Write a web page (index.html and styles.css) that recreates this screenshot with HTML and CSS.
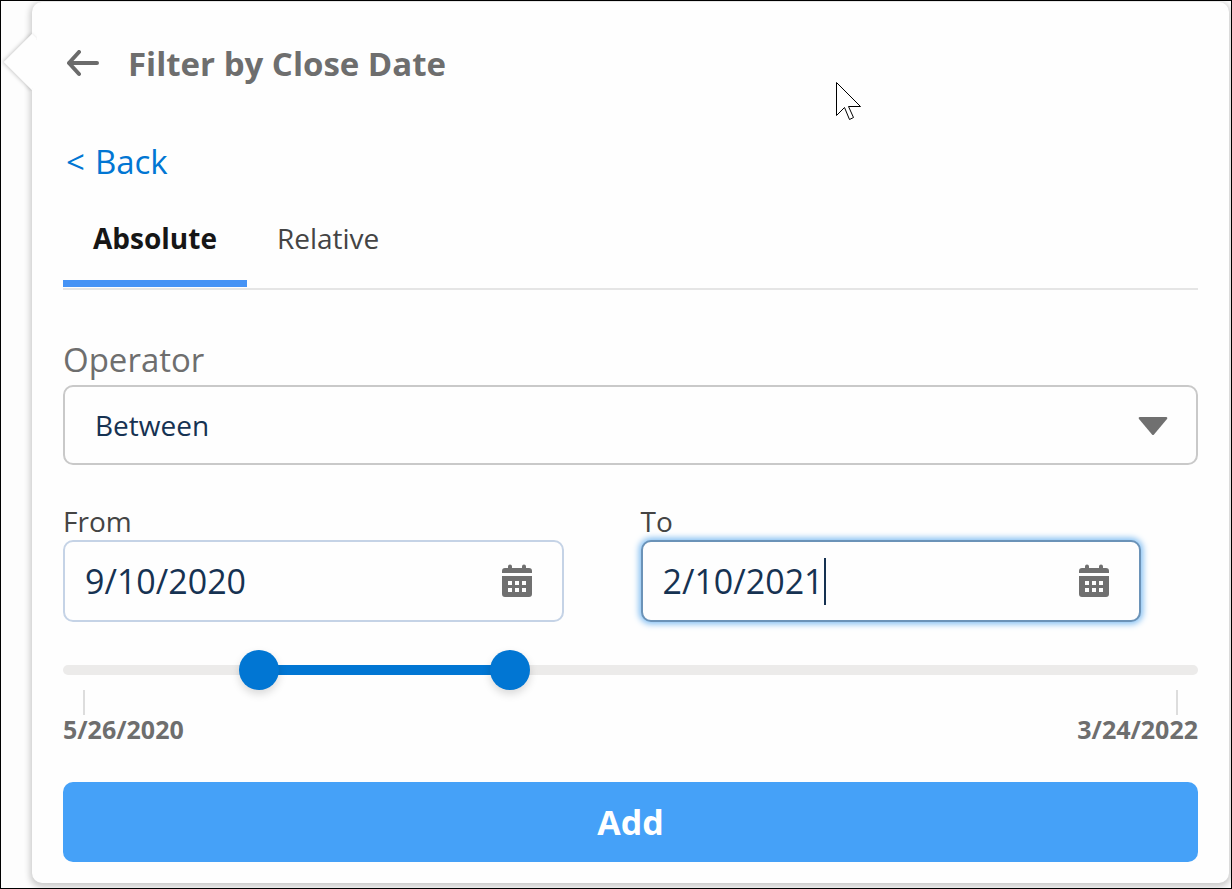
FILE: index.html
```html
<!DOCTYPE html>
<html lang="en">
<head>
    <meta charset="UTF-8">
    <meta name="viewport" content="width=device-width, initial-scale=1.0">
    <title>Filter by Close Date</title>
    <link rel="stylesheet" href="styles.css">
</head>
<body>
    <main class="popover">
        <header class="popover-header">
            <button class="icon-button" type="button" aria-label="Go back">
                <svg width="34" height="28" viewBox="0 0 34 28" fill="none" stroke="#6b6b6b" stroke-width="4" stroke-linecap="round" stroke-linejoin="round">
                    <path d="M13 2L3 13L13 24M3 13H31"/>
                </svg>
            </button>
            <h1 class="title">Filter by Close Date</h1>
        </header>

        <a class="back-link" href="#"><span>&lt;</span><span>Back</span></a>

        <nav class="tabs" role="tablist">
            <button class="tab active" type="button" role="tab" aria-selected="true">Absolute</button>
            <button class="tab" type="button" role="tab" aria-selected="false">Relative</button>
        </nav>

        <form class="filter-form">
            <label class="operator-label" for="operator">Operator</label>
            <div class="select-wrap">
                <select class="select" id="operator">
                    <option>Between</option>
                </select>
                <svg class="select-arrow" width="30" height="20" viewBox="0 0 30 20" fill="#707070">
                    <path d="M2 2H28Q30 2 29 4L16 19.500Q15 20.500 14 19.500L1 4Q0 2 2 2Z"/>
                </svg>
            </div>

            <div class="dates">
                <div class="field">
                    <label class="date-label" for="from">From</label>
                    <div class="date-box">
                        <input class="date-input" id="from" type="text" value="9/10/2020">
                        <button class="icon-button calendar" type="button" aria-label="Pick start date">
                            <svg width="30" height="34" viewBox="0 0 30 34" fill="#707070">
                                <path d="M3 4H6V2.500a2 2 0 0 1 4 0V4H20V2.500a2 2 0 0 1 4 0V4H27a3 3 0 0 1 3 3V9H0V7a3 3 0 0 1 3-3Z"/>
                                <path fill-rule="evenodd" d="M0 12H30V30a3 3 0 0 1-3 3H3a3 3 0 0 1-3-3ZM6 17V21H10V17ZM13 17V21H17V17ZM20 17V21H24V17ZM6 24V28H10V24ZM13 24V28H17V24ZM20 24V28H24V24Z"/>
                            </svg>
                        </button>
                    </div>
                </div>
                <div class="field">
                    <label class="date-label" for="to">To</label>
                    <div class="date-box focused">
                        <input class="date-input" id="to" type="text" value="2/10/2021">
                        <span class="caret"></span>
                        <button class="icon-button calendar" type="button" aria-label="Pick end date">
                            <svg width="30" height="34" viewBox="0 0 30 34" fill="#707070">
                                <path d="M3 4H6V2.500a2 2 0 0 1 4 0V4H20V2.500a2 2 0 0 1 4 0V4H27a3 3 0 0 1 3 3V9H0V7a3 3 0 0 1 3-3Z"/>
                                <path fill-rule="evenodd" d="M0 12H30V30a3 3 0 0 1-3 3H3a3 3 0 0 1-3-3ZM6 17V21H10V17ZM13 17V21H17V17ZM20 17V21H24V17ZM6 24V28H10V24ZM13 24V28H17V24ZM20 24V28H24V24Z"/>
                            </svg>
                        </button>
                    </div>
                </div>
            </div>

            <!-- slider values are days since 5/26/2020 -->
            <div class="slider">
                <div class="track">
                    <div class="track-fill" style="margin-left: 16%; width: 23%"></div>
                </div>
                <input class="range" type="range" min="0" max="667" value="107" aria-label="Start date">
                <input class="range" type="range" min="0" max="667" value="260" aria-label="End date">
            </div>
            <div class="scale">
                <span class="scale-end">5/26/2020</span>
                <span class="scale-end last">3/24/2022</span>
            </div>

            <button class="add-button" type="button">Add</button>
        </form>
    </main>

    <svg class="pointer" width="26" height="40" viewBox="0 0 26 40" fill="#fff" stroke="#000" stroke-width="1">
        <path d="M.5 .5V33.500L8.500 25.500L13.500 37.500L17.500 35.500L12.500 24.500H24.500Z"/>
    </svg>
</body>
</html>
```

FILE: styles.css
```css
* {
    box-sizing: border-box;
}
body {
    margin: 0;
    min-height: 100vh;
    padding: 1px 2px 4px 31px;
    border: 1px solid #000;
    background-color: #fdfdfd;
    font-family: "Open Sans", "Noto Sans", sans-serif;
    color: #444;
}
button, input, select {
    font-family: inherit;
}
.popover {
    position: relative;
    padding: 38px 31px 21px;
    border-radius: 10px;
    background-color: #fefefe;
    box-shadow: 0 2px 6px 2px rgba(0,0,0,0.2);
}
/* nubbin on the left edge */
.popover::before {
    content: "";
    position: absolute;
    top: 40px;
    left: -20px;
    width: 40px;
    height: 40px;
    background-color: #fefefe;
    box-shadow: -1px 1px 4px rgba(0,0,0,0.2);
    transform: rotate(45deg);
    clip-path: polygon(-20% -20%, 0 -20%, 100% 100%, 100% 120%, -20% 120%);
}
.icon-button {
    display: flex;
    padding: 0;
    border: 0;
    background: none;
}
.popover-header {
    display: flex;
    align-items: center;
    gap: 28px;
    padding-left: 3px;
}
.title {
    margin: 0;
    font-size: 33px;
    line-height: 48px;
    font-weight: 700;
    color: #6e6e6e;
}
.back-link {
    display: flex;
    gap: 10px;
    width: fit-content;
    margin: 50px 0 0 3px;
    font-size: 33px;
    line-height: 48px;
    color: #0176d3;
    text-decoration: none;
}
.tabs {
    display: flex;
    padding-bottom: 1px;
    border-bottom: 2px solid #e5e5e5;
}
.tab {
    padding: 32px 30px 22px;
    border: 0;
    border-bottom: 7px solid transparent;
    background: none;
    font-size: 28px;
    line-height: 40px;
    color: #444;
}
.tab.active {
    border-bottom-color: #4693f5;
    font-weight: 700;
    color: #161616;
}
.filter-form {
    display: flex;
    flex-direction: column;
}
.operator-label {
    margin-top: 46px;
    padding-bottom: 1px;
    font-size: 33px;
    line-height: 48px;
    color: #6e6e6e;
}
.select-wrap {
    display: grid;
    align-items: center;
}
.select {
    grid-area: 1 / 1;
    width: 100%;
    height: 80px;
    padding: 0 30px;
    border: 2px solid #c9c9c9;
    border-radius: 10px;
    appearance: none;
    background-color: #fefefe;
    font-size: 28px;
    color: #163252;
}
.select-arrow {
    grid-area: 1 / 1;
    justify-self: end;
    margin-right: 30px;
    pointer-events: none;
}
.dates {
    display: grid;
    grid-template-columns: 1fr 1fr;
    gap: 77px;
    margin-top: 38px;
    padding-right: 57px;
}
.field {
    display: flex;
    flex-direction: column;
}
.date-label {
    padding-bottom: 1px;
    font-size: 28px;
    line-height: 36px;
}
.date-box {
    display: flex;
    align-items: center;
    height: 82px;
    padding: 0 30px 0 20px;
    border: 2px solid #c5d3e6;
    border-radius: 10px;
    background-color: #fefefe;
}
.date-box.focused {
    border-color: #6b93b8;
    box-shadow: 0 0 6px 2px #7fbdf2;
}
.date-input {
    field-sizing: content;
    padding: 0;
    border: 0;
    outline: 0;
    background: none;
    font-size: 34px;
    line-height: 48px;
    color: #163252;
}
.caret {
    width: 2px;
    height: 47px;
    background-color: #163252;
}
.calendar {
    margin-left: auto;
}
.slider {
    display: grid;
    align-items: center;
    margin-top: 28px;
}
.track, .range {
    grid-area: 1 / 1;
}
.track {
    height: 10px;
    padding: 0 20px;
    border-radius: 5px;
    background-color: #ecebea;
}
.track-fill {
    height: 10px;
    background-color: #0176d3;
}
.range {
    width: 100%;
    height: 40px;
    margin: 0;
    appearance: none;
    background: none;
    pointer-events: none;
}
.range::-webkit-slider-thumb {
    width: 40px;
    height: 40px;
    border: 0;
    border-radius: 50%;
    appearance: none;
    background-color: #0176d3;
    box-shadow: 0 4px 8px rgba(0,0,0,0.15);
    pointer-events: auto;
}
.scale {
    display: flex;
    justify-content: space-between;
}
.scale-end {
    display: flex;
    flex-direction: column;
    font-size: 25px;
    line-height: 28px;
    font-weight: 700;
    color: #6e6e6e;
}
.scale-end::before {
    content: "";
    width: 2px;
    height: 25px;
    margin: 0 20px;
    background-color: #ddd;
}
.scale-end.last::before {
    align-self: flex-end;
}
.add-button {
    height: 80px;
    margin-top: 39px;
    border: 0;
    border-radius: 10px;
    background-color: #45a1f8;
    font-size: 34px;
    font-weight: 700;
    color: #fff;
}
.pointer {
    position: absolute;
    top: 82px;
    left: 836px;
}
```
